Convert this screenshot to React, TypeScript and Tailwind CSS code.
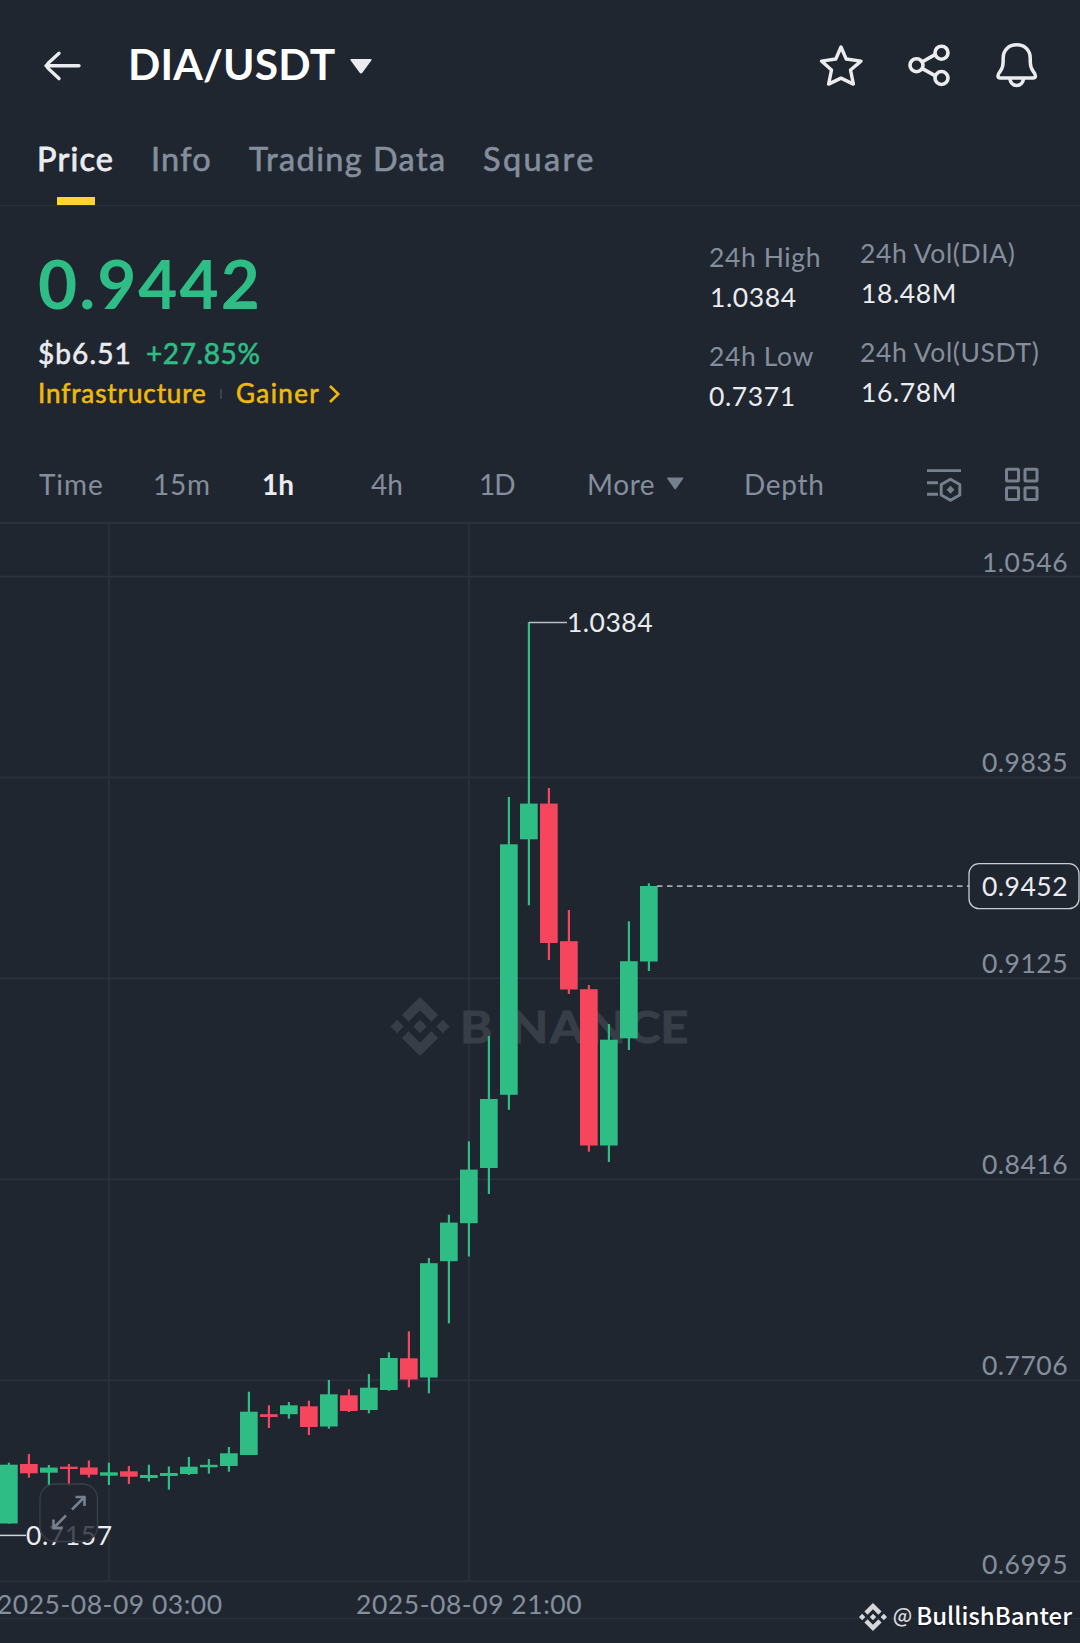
import React from "react";

const GREEN = "#2ebd85";
const RED = "#f6465d";
const GRID = "#2b313d";

const BINANCE_MARK =
  "M16.624 13.9202l2.7175 2.7154-7.353 7.353-7.353-7.352 2.7175-2.7164 4.6355 4.6595 4.6356-4.6595zm4.6366-4.6366L24 12l-2.7154 2.7164L18.5682 12l2.6924-2.7164zm-9.272.001l2.7163 2.6914-2.7164 2.7174v-.001L9.2721 12l2.7164-2.7154zm-9.2722-.001L5.4088 12l-2.6914 2.6924L0 12l2.7164-2.7164zM11.9885.0115l7.353 7.329-2.7174 2.7154-4.6356-4.6356-4.6355 4.6595-2.7174-2.7154 7.353-7.353z";

// [direction, wick top, body top, body bottom, wick bottom]
type Candle = ["up" | "down", number, number, number, number];

const candles: Candle[] = [
  ["up", 1462.7, 1464.7, 1523.5, 1523.5],
  ["down", 1454, 1464, 1473.3, 1477.7],
  ["up", 1465, 1467.6, 1472.7, 1486],
  ["down", 1464, 1466.7, 1469, 1486],
  ["down", 1460.5, 1467.5, 1474.7, 1477.5],
  ["up", 1462.7, 1472.3, 1475.7, 1485],
  ["down", 1466, 1471.3, 1476.7, 1484],
  ["up", 1464.7, 1475, 1478, 1481.5],
  ["up", 1466.5, 1473, 1476, 1489.7],
  ["up", 1457, 1466.7, 1474, 1475],
  ["up", 1459, 1464.8, 1467.3, 1473.7],
  ["up", 1447, 1453.3, 1466, 1471.7],
  ["up", 1391.7, 1411.7, 1455, 1455],
  ["down", 1405.3, 1414.2, 1417, 1428],
  ["up", 1402, 1405.3, 1414.2, 1418.7],
  ["down", 1400.7, 1406.3, 1427, 1435],
  ["up", 1380, 1394.3, 1426.5, 1428.7],
  ["down", 1389.3, 1395.3, 1411, 1412],
  ["up", 1374, 1387.7, 1410, 1413.3],
  ["up", 1352.3, 1358, 1390, 1390.7],
  ["down", 1331.3, 1358.3, 1379.5, 1387.3],
  ["up", 1258, 1263.2, 1377.5, 1393.3],
  ["up", 1214.7, 1222.6, 1261.2, 1323.3],
  ["up", 1141.3, 1169.6, 1223.2, 1256.5],
  ["up", 1036, 1099, 1168, 1194],
  ["up", 797, 844.3, 1094.8, 1109.8],
  ["up", 622, 803.6, 839.3, 905.3],
  ["down", 788, 803.6, 943, 960],
  ["down", 910, 941.2, 989.5, 994],
  ["down", 985, 989.2, 1145.5, 1151.7],
  ["up", 1024, 1039.7, 1145.5, 1162],
  ["up", 921.3, 961.2, 1038.3, 1050],
  ["up", 883.3, 886, 961.5, 971],
];

// [grid line y, label baseline y, label]
const priceLevels: [number, number, string][] = [
  [576.7, 572, "1.0546"],
  [777.6, 772.3, "0.9835"],
  [978.5, 973.3, "0.9125"],
  [1179.5, 1174.3, "0.8416"],
  [1380.4, 1375.2, "0.7706"],
  [1581.3, 1574.4, "0.6995"],
];

function Header() {
  return (
    <header className="flex h-[126px] items-center">
      <svg className="ml-11" width="40" height="56" viewBox="44 35 40 56" fill="none" stroke="#eaecef" strokeWidth="3.4" strokeLinecap="round" strokeLinejoin="round">
        <path d="M79 65.800H46M59 53.200 48.400 63Q45.500 65.800 48.400 68.600L59 78.600" />
      </svg>
      <h1 className="ml-[44px] mt-0.5 w-[212px] whitespace-nowrap text-[42.500px] font-bold leading-[52px] tracking-[0.2px] text-white">
        DIA/USDT
      </h1>
      <svg className="ml-2" width="26" height="56" viewBox="348 35 26 56" fill="#eaecef">
        <path d="M351.500 59h19q2 0 .8 1.600l-8.800 12q-1.500 2-3 0l-8.800-12Q349.500 59 351.500 59z" />
      </svg>
      <div className="ml-auto mr-10 flex items-center gap-11">
        <svg width="46" height="56" viewBox="818 35.500 46 56" fill="none" stroke="#eaecef" strokeWidth="3.400" strokeLinejoin="round">
          <path d="M841 47.500l5.200 12 14.800 2.100-10.500 8.900 2.900 14.100-12.400-6-12.400 6 2.900-14.100L821.500 61.600l14.300-2.100z" />
        </svg>
        <svg width="44" height="56" viewBox="908 35 44 56" fill="none" stroke="#eaecef" strokeWidth="3.600">
          <circle cx="916.500" cy="65.200" r="6.500" />
          <circle cx="941.500" cy="52.700" r="6.500" />
          <circle cx="941.500" cy="78" r="6.500" />
          <path d="M922.400 61.800 935.500 54.400M922.400 68.600 935.500 75.800" />
        </svg>
        <svg width="44" height="56" viewBox="996 35 44 56" fill="none" stroke="#eaecef" strokeWidth="3.500" strokeLinejoin="round">
          <path d="M1016.700 44.800c-8 0-13.500 5.500-13.500 13 0 8.200-.6 10.300-3.200 13.800-1.500 1.900-2.300 3.100-2 4.800.2 1.100 1 1.600 2.300 1.600h32.800c1.300 0 2.100-.5 2.300-1.600.3-1.700-.5-2.900-2-4.800-2.600-3.500-3.200-5.600-3.200-13.800 0-7.500-5.500-13-13.500-13z" />
          <path d="M1009.700 78c.5 4.600 3.300 7.400 7 7.400s6.500-2.800 7-7.400" />
        </svg>
      </div>
    </header>
  );
}

function Tabs() {
  return (
    <nav className="flex h-20 border-b border-[#2b313d] pl-[37px] text-[32.500px] leading-[65px] text-[#848e9c]">
      <div className="relative w-[114px] tracking-[1.200px] text-[#eaecef] [-webkit-text-stroke:0.8px]">
        Price
        <span className="absolute left-5 top-[71px] h-2 w-[38px] bg-[#fcd535]" />
      </div>
      <div className="w-[98px] tracking-[1.200px] [-webkit-text-stroke:0.6px]">Info</div>
      <div className="w-[234px] whitespace-nowrap tracking-[1.400px] [-webkit-text-stroke:0.6px]">Trading Data</div>
      <div className="tracking-[2.400px] [-webkit-text-stroke:0.6px]">Square</div>
    </nav>
  );
}

function Stat({ label, value }: { label: string; value: string }) {
  return (
    <div className="whitespace-nowrap">
      <div className="text-[26.500px] tracking-[0.600px] text-[#848e9c]">{label}</div>
      <div className={`text-[26.500px] tracking-[0.600px] text-[#eaecef] ${value.startsWith("1") ? "pl-px" : ""}`}>{value}</div>
    </div>
  );
}

function Summary() {
  return (
    <section className="flex h-[241px]">
      <div className="w-[672px] pl-[38px] pt-[37px]">
        <div className="text-[67.500px] font-bold leading-[80px] tracking-[2px] text-[#2ebd85]">0.9442</div>
        <div className="mt-[9.500px] flex text-[28px] leading-[40px]">
          <span className="w-[108px] tracking-[1.100px] text-[#eaecef] [-webkit-text-stroke:0.6px]">$b6.51</span>
          <span className="tracking-[0.600px] text-[#2ebd85] [-webkit-text-stroke:0.6px]">+27.85%</span>
        </div>
        <div className="flex items-center text-[26px] leading-[40px] text-[#f0b90b]">
          <span className="w-[182px] tracking-[0.900px] [-webkit-text-stroke:0.6px]">Infrastructure</span>
          <span className="mr-[14px] mt-0.5 h-[10px] w-0.5 bg-[#3a414d]" />
          <span className="tracking-[1.400px] [-webkit-text-stroke:0.6px]">Gainer</span>
          <svg className="ml-2 mt-[3px]" width="14" height="18" viewBox="0 0 14 18" fill="none" stroke="#f0b90b" strokeWidth="2.600">
            <path d="M2 1 10.200 9 2 17" />
          </svg>
        </div>
      </div>
      <div className="ml-[37px] flex w-[151px] flex-col gap-[19.600px] pt-[30.500px] leading-[40px]">
        <Stat label="24h High" value="1.0384" />
        <Stat label="24h Low" value="0.7371" />
      </div>
      <div className="flex flex-col gap-[20.400px] pt-[28px] leading-[39.500px]">
        <Stat label="24h Vol(DIA)" value="18.48M" />
        <Stat label="24h Vol(USDT)" value="16.78M" />
      </div>
    </section>
  );
}

function Intervals() {
  return (
    <div className="mb-px flex h-[74px] items-center whitespace-nowrap pl-[39px] text-[28px] leading-[40px] text-[#848e9c]">
      <span className="w-[114px] tracking-[0.900px]">Time</span>
      <span className="w-[109px] tracking-[0.800px]">15m</span>
      <span className="w-[109px] font-bold text-[#eaecef]">1h</span>
      <span className="w-[108px]">4h</span>
      <span className="w-[108px] tracking-[-1px]">1D</span>
      <span className="w-[79px] tracking-[0.600px]">More</span>
      <svg className="w-[78px]" width="78" height="40" viewBox="666 464 78 40" fill="#76808f">
        <path d="M668 477.500h14.500q1.500 0 .6 1.300l-7 10q-.9 1.200-1.800 0l-7-10Q666.500 477.500 668 477.500z" />
      </svg>
      <span className="w-[181px] tracking-[0.700px]">Depth</span>
      <svg width="38" height="40" viewBox="925 464 38 40" fill="none" stroke="#76808f" strokeWidth="2.900">
        <path d="M927 470.600h34M927 482.700h11M927 494.200h11" />
        <path d="M950.500 479.200l9.300 5.300v10.400l-9.300 5.300-9.300-5.300v-10.400z" strokeLinejoin="round" />
        <path d="M950.500 485.700l3.900 4-3.900 4-3.900-4z" fill="#76808f" stroke="none" />
      </svg>
      <svg className="ml-[41px]" width="38" height="40" viewBox="1004 464 38 40" fill="none" stroke="#76808f" strokeWidth="3">
        <rect x="1006.500" y="469.200" width="12" height="11.800" rx="1" />
        <rect x="1025" y="469.200" width="12" height="11.800" rx="1" />
        <rect x="1006.500" y="487.700" width="12" height="11.800" rx="1" />
        <rect x="1025" y="487.700" width="12" height="11.800" rx="1" />
      </svg>
    </div>
  );
}

function Chart() {
  return (
    <svg className="block" width="1080" height="1121" viewBox="0 522 1080 1121" fontFamily="Lato, sans-serif" fontSize="26.500">
      <g fill={GRID}>
        <rect x="0" y="522" width="1080" height="2" />
        {priceLevels.map(([y]) => (
          <rect key={y} x="0" y={y - 1} width="1080" height="1.700" />
        ))}
        <rect x="108.200" y="524" width="1.600" height="1057" />
        <rect x="468.200" y="524" width="1.600" height="1057" />
        <rect x="0" y="1618" width="1080" height="1.200" />
      </g>

      <g fill="#383e47">
        <path d={BINANCE_MARK} transform="translate(390.500 997) scale(2.460)" />
        <text x="0 33.600 46 81.800 116.400 152.700 182" transform="translate(460 1042.500) scale(1.100 1)" fontSize="44.500" fontWeight="700" stroke="#383e47" strokeWidth="1">
          BINANCE
        </text>
      </g>

      {candles.map(([dir, high, top, bottom, low], i) => (
        <g key={i} fill={dir === "up" ? GREEN : RED}>
          <rect x={20 * i} y={top} width="17.700" height={bottom - top} />
          <rect x={20 * i + 7.800} y={high} width="2.200" height={low - high} />
        </g>
      ))}

      <path d="M529 622.600h38" stroke="#b9bdc4" strokeWidth="1.500" />
      <text x="567" y="632.200" fill="#eaecef" letterSpacing="0.500">1.0384</text>
      <path d="M0 1535.400h26" stroke="#cfd2d7" strokeWidth="1.500" />
      <text x="26" y="1545.300" fill="#eaecef" letterSpacing="0.600">0.7157</text>

      <rect x="40" y="1484" width="57.500" height="57.500" rx="15" fill="#202630" fillOpacity="0.800" stroke="#3a404b" strokeWidth="1.300" />
      <g fill="none" stroke="#76808f" strokeWidth="2.600">
        <path d="M72 1509.500 84.500 1497M75.500 1497h9v9" />
        <path d="M66 1515.500 53.500 1528M53.500 1519.500v8.700h9" />
      </g>

      <g fill="#848e9c">
        {priceLevels.map(([, y, label]) => (
          <text key={label} x="1068" y={y} textAnchor="end" letterSpacing="0.500">{label}</text>
        ))}
        <text x="-3" y="1613.700" letterSpacing="0.500">2025-08-09 03:00</text>
        <text x="356" y="1613.700" letterSpacing="0.540">2025-08-09 21:00</text>
      </g>

      <path d="M657 886.200h312" stroke="#a4a9b2" strokeWidth="1.700" strokeDasharray="5.500 4.500" />
      <rect x="969" y="863.700" width="110" height="45" rx="10" fill="#202630" stroke="#c9ccd2" strokeWidth="1.300" />
      <text x="1068" y="896.200" textAnchor="end" fill="#eaecef" letterSpacing="0.500">0.9452</text>
    </svg>
  );
}

export default function App() {
  return (
    <main className="relative h-[1643px] w-[1080px] overflow-hidden bg-[#202630] font-['Lato',sans-serif]">
      <Header />
      <Tabs />
      <Summary />
      <Intervals />
      <Chart />
      <div className="absolute bottom-[10px] right-[8px] flex items-center font-['Noto_Sans_CJK_SC',sans-serif] text-[24px] font-medium leading-[36px]">
        <svg className="mr-[6px] mt-[3px]" width="28" height="28" viewBox="0 0 24 24" fill="#d5d7da">
          <path d={BINANCE_MARK} />
        </svg>
        <span className="mr-[4px] text-[20px] text-[#d5d7da]">@</span>
        <span className="text-white [text-shadow:0_1px_2px_rgba(0,0,0,0.5)]">BullishBanter</span>
      </div>
    </main>
  );
}
